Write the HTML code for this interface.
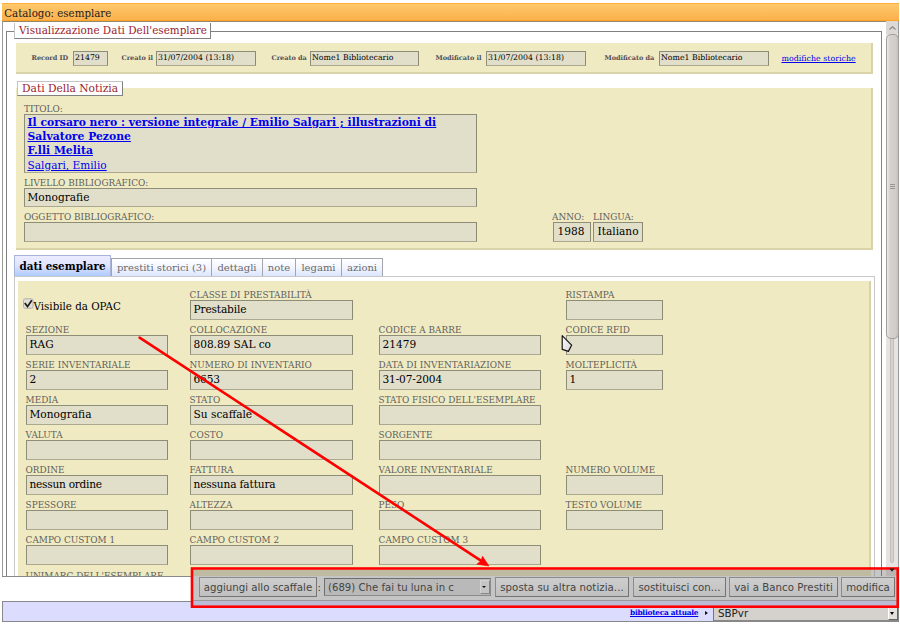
<!DOCTYPE html>
<html><head><meta charset="utf-8"><title>Catalogo: esemplare</title>
<style>
html,body{margin:0;padding:0;background:#fff;}
body{width:900px;height:624px;overflow:hidden;position:relative;font-family:"DejaVu Serif","Liberation Serif",serif;font-size:10px;color:#000;}
.abs,.lb,.in,.sl,.si{position:absolute;white-space:nowrap;}
#titlebar{left:2px;top:3px;width:897px;height:18px;background:linear-gradient(#fdb040 0,#fdb040 1px,#fec96c 1px,#fcb04c 17px,#faa428 17px);}
#titlebar span{position:absolute;left:2.2px;top:3.7px;font-size:10.25px;line-height:12px;color:#1a1a1a;}
#frame{left:2px;top:21px;width:897px;height:556px;box-sizing:border-box;border-left:1px solid #999;border-bottom:1px solid #888;border-top:1px solid #958870;overflow:hidden;}
.lb{font-size:8.9px;line-height:11px;color:#5e5e5e;letter-spacing:0;}
.in{height:18px;line-height:16.6px;font-size:10.6px;background:#e1dfca;border:1px solid;border-color:#8e8e78 #8a8a72 #aaa890 #8e8e78;padding-left:2px;text-indent:0.5px;box-sizing:content-box;overflow:hidden;}
.tl{position:absolute;left:2px;height:14px;line-height:14px;font-weight:bold;font-size:10.8px;white-space:nowrap;}
.beige{background:#efeac2;}
.leg{background:#fff;border:1px solid;border-color:#c4c4c4 #808080 #808080 #c4c4c4;color:#9b1c2e;font-size:10.5px;box-sizing:border-box;}
.sl{font-size:6.5px;font-weight:bold;color:#50505a;margin-left:-0.5px;line-height:10px;}
.si{height:13px;line-height:12.7px;font-size:7.8px;background:#e1dfca;border:1px solid;border-color:#8e8e78 #8a8a72 #aaa890 #8e8e78;padding-left:1px;overflow:hidden;}
a{color:#0000ee;text-decoration:underline;}
.tab{position:absolute;top:258px;height:19px;box-sizing:border-box;border:1px solid #a4a4ac;border-bottom:none;background:linear-gradient(#fff,#f2f5ff 50%,#d8e4ff);color:#6a6a6a;font-size:10px;line-height:18px;text-align:center;}
.btn{position:absolute;top:577px;height:20px;box-sizing:border-box;border:1px solid;border-color:#8c8c8c #747474 #747474 #8c8c8c;background:linear-gradient(#cecece,#c0c0c0);color:#444;font-family:"DejaVu Sans","Liberation Sans",sans-serif;font-size:10.2px;line-height:19.4px;text-align:center;white-space:nowrap;}
</style></head><body>
<div id="titlebar" class="abs"><span>Catalogo: esemplare</span></div>
<div id="frame" class="abs"></div>

<!-- outer fieldset -->
<div class="abs" style="left:6px;top:31px;width:876px;height:560px;border:1px solid #808080;border-bottom:none;box-sizing:border-box;"></div>
<div class="abs leg" style="left:14px;top:23px;width:197px;height:16px;line-height:15px;padding-left:4px;font-size:10.4px;border-top:none;">Visualizzazione Dati Dell'esemplare</div>

<!-- record bar -->
<div class="abs beige" style="left:16px;top:43px;width:857px;height:31px;box-sizing:border-box;border-right:2px solid #d8d3a8;border-bottom:2px solid #d8d3a8;"></div>
<div class="sl" style="left:32px;top:53px">Record ID</div>
<div class="si" style="left:73px;top:51px;width:32px">21479</div>
<div class="sl" style="left:122px;top:53px">Creato il</div>
<div class="si" style="left:156px;top:51px;width:97px">31/07/2004 (13:18)</div>
<div class="sl" style="left:272px;top:53px">Creato da</div>
<div class="si" style="left:310px;top:51px;width:106px">Nome1 Bibliotecario</div>
<div class="sl" style="left:436px;top:53px">Modificato il</div>
<div class="si" style="left:486px;top:51px;width:97px">31/07/2004 (13:18)</div>
<div class="sl" style="left:605px;top:53px">Modificato da</div>
<div class="si" style="left:659px;top:51px;width:107px">Nome1 Bibliotecario</div>
<a class="abs" style="left:781.5px;top:54px;font-size:7.9px;line-height:10px;">modifiche storiche</a>

<!-- dati della notizia -->
<div class="abs beige" style="left:16px;top:88px;width:857px;height:162px;box-sizing:border-box;border-right:2px solid #d8d3a8;border-bottom:2px solid #d8d3a8;"></div>
<div class="abs leg" style="left:17px;top:81px;width:106px;height:15px;line-height:13px;padding-left:4px;font-size:10.65px;">Dati Della Notizia</div>
<div class="lb" style="left:24px;top:104px">TITOLO:</div>
<div class="in" style="left:24px;top:114px;width:449px;height:57px;padding:0 0 0 2px;">
<div class="tl" style="top:1px"><a>Il corsaro nero : versione integrale / Emilio Salgari ; illustrazioni di</a></div>
<div class="tl" style="top:15px"><a>Salvatore Pezone</a></div>
<div class="tl" style="top:29px"><a>F.lli Melita</a></div>
<div class="tl" style="top:43px;font-weight:normal;font-size:10.55px"><a>Salgari, Emilio</a></div>
</div>
<div class="lb" style="left:24px;top:178px">LIVELLO BIBLIOGRAFICO:</div>
<div class="in" style="left:24px;top:188px;width:449px;height:17px">Monografie</div>
<div class="lb" style="left:24px;top:212px">OGGETTO BIBLIOGRAFICO:</div>
<div class="in" style="left:24px;top:222px;width:449px"></div>
<div class="lb" style="left:552px;top:212px">ANNO:</div>
<div class="in" style="left:553px;top:222px;width:33px;padding-left:3px">1988</div>
<div class="lb" style="left:593px;top:212px">LINGUA:</div>
<div class="in" style="left:593px;top:222px;width:45px;padding-left:3px">Italiano</div>

<!-- tabs -->
<div class="tab" style="left:14px;top:255px;height:22px;line-height:21px;width:97px;background:linear-gradient(#ececff,#dfe4ff 45%,#a9c8fd);color:#000;font-weight:bold;border-color:#a8b4d8;font-size:10.35px">dati esemplare</div>
<div class="tab" style="left:111px;width:101px;">prestiti storici (3)</div>
<div class="tab" style="left:211px;width:52px;">dettagli</div>
<div class="tab" style="left:262px;width:34px;">note</div>
<div class="tab" style="left:295px;width:47px;">legami</div>
<div class="tab" style="left:341px;width:42px;">azioni</div>
<!-- tab panel -->
<div class="abs" style="left:14px;top:276px;width:861px;height:320px;border:1px solid #c8c8c8;box-sizing:border-box;"></div>
<div class="abs beige" style="left:18px;top:281px;width:853px;height:320px;box-sizing:border-box;border-right:2px solid #d8d3a8;"></div>
<svg class="abs" style="left:22px;top:297px" width="13" height="13" viewBox="0 0 13 13"><rect x="1.5" y="1.8" width="9.5" height="9.5" rx="1.6" fill="#e0deda" stroke="#b4b0a8" stroke-width="1"/><path d="M2.8,6 L5.5,9.6 L9.8,3.2" fill="none" stroke="#1a1a1a" stroke-width="1.7" stroke-linejoin="miter"/></svg>
<div class="abs" style="left:33.5px;top:299.5px;font-size:10.3px;line-height:13px">Visibile da OPAC</div>
<div class="lb" style="left:189.6px;top:290px">CLASSE DI PRESTABILITÀ</div>
<div class="in" style="left:190px;top:300px;width:159px;letter-spacing:-0.15px">Prestabile</div>
<div class="lb" style="left:565.6px;top:290px">RISTAMPA</div>
<div class="in" style="left:566px;top:300px;width:93px"></div>
<div class="lb" style="left:25.6px;top:325px">SEZIONE</div>
<div class="in" style="left:26px;top:335px;width:138px">RAG</div>
<div class="lb" style="left:189.6px;top:325px">COLLOCAZIONE</div>
<div class="in" style="left:190px;top:335px;width:159px;letter-spacing:-0.05px">808.89 SAL co</div>
<div class="lb" style="left:378.6px;top:325px">CODICE A BARRE</div>
<div class="in" style="left:379px;top:335px;width:158px">21479</div>
<div class="lb" style="left:565.6px;top:325px">CODICE RFID</div>
<div class="in" style="left:566px;top:335px;width:93px"></div>
<div class="lb" style="left:25.6px;top:360px">SERIE INVENTARIALE</div>
<div class="in" style="left:26px;top:370px;width:138px">2</div>
<div class="lb" style="left:189.6px;top:360px">NUMERO DI INVENTARIO</div>
<div class="in" style="left:190px;top:370px;width:159px;letter-spacing:-0.15px">6653</div>
<div class="lb" style="left:378.6px;top:360px">DATA DI INVENTARIAZIONE</div>
<div class="in" style="left:379px;top:370px;width:158px;letter-spacing:-0.16px">31-07-2004</div>
<div class="lb" style="left:565.6px;top:360px">MOLTEPLICITÀ</div>
<div class="in" style="left:566px;top:370px;width:93px">1</div>
<div class="lb" style="left:25.6px;top:395px">MEDIA</div>
<div class="in" style="left:26px;top:405px;width:138px">Monografia</div>
<div class="lb" style="left:189.6px;top:395px">STATO</div>
<div class="in" style="left:190px;top:405px;width:159px">Su scaffale</div>
<div class="lb" style="left:378.6px;top:395px">STATO FISICO DELL'ESEMPLARE</div>
<div class="in" style="left:379px;top:405px;width:158px"></div>
<div class="lb" style="left:25.6px;top:430px">VALUTA</div>
<div class="in" style="left:26px;top:440px;width:138px"></div>
<div class="lb" style="left:189.6px;top:430px">COSTO</div>
<div class="in" style="left:190px;top:440px;width:159px"></div>
<div class="lb" style="left:378.6px;top:430px">SORGENTE</div>
<div class="in" style="left:379px;top:440px;width:158px"></div>
<div class="lb" style="left:25.6px;top:465px">ORDINE</div>
<div class="in" style="left:26px;top:475px;width:138px;letter-spacing:-0.26px">nessun ordine</div>
<div class="lb" style="left:189.6px;top:465px">FATTURA</div>
<div class="in" style="left:190px;top:475px;width:159px;letter-spacing:-0.15px">nessuna fattura</div>
<div class="lb" style="left:378.6px;top:465px">VALORE INVENTARIALE</div>
<div class="in" style="left:379px;top:475px;width:158px"></div>
<div class="lb" style="left:565.6px;top:465px">NUMERO VOLUME</div>
<div class="in" style="left:566px;top:475px;width:93px"></div>
<div class="lb" style="left:25.6px;top:500px">SPESSORE</div>
<div class="in" style="left:26px;top:510px;width:138px"></div>
<div class="lb" style="left:189.6px;top:500px">ALTEZZA</div>
<div class="in" style="left:190px;top:510px;width:159px"></div>
<div class="lb" style="left:378.6px;top:500px">PESO</div>
<div class="in" style="left:379px;top:510px;width:158px"></div>
<div class="lb" style="left:565.6px;top:500px">TESTO VOLUME</div>
<div class="in" style="left:566px;top:510px;width:93px"></div>
<div class="lb" style="left:25.6px;top:535px">CAMPO CUSTOM 1</div>
<div class="in" style="left:26px;top:545px;width:138px"></div>
<div class="lb" style="left:189.6px;top:535px">CAMPO CUSTOM 2</div>
<div class="in" style="left:190px;top:545px;width:159px"></div>
<div class="lb" style="left:378.6px;top:535px">CAMPO CUSTOM 3</div>
<div class="in" style="left:379px;top:545px;width:158px"></div>
<div class="lb" style="left:25.6px;top:571px">UNIMARC DELL'ESEMPLARE</div>


<!-- scrollbar -->
<div class="abs" style="left:886px;top:21px;width:13px;height:555px;background:#e6e3e0;border-right:1px solid #999;box-sizing:border-box;"></div>
<div class="abs" style="left:886px;top:21px;width:12px;height:13px;background:#dbd8d5;"></div>
<div class="abs" style="left:890px;top:330px;width:4px;height:233px;background:#d6d3cf;border:1px solid #c2beba;border-radius:2px;box-sizing:border-box;"></div>
<div class="abs" style="left:886px;top:34px;width:13px;height:305px;border-radius:5px;border:1px solid #a29e9a;box-sizing:border-box;background:linear-gradient(90deg,#eceae8,#d6d2cf 25%,#d0ccc9 80%,#c4c0bd);"></div>
<svg class="abs" style="left:886px;top:21px" width="13" height="556" viewBox="0 0 13 556">
<polyline points="3.5,8.5 6.5,5.7 9.5,8.5" fill="none" stroke="#8a8784" stroke-width="1.2"/>
<path d="M4,163.5h5M4,165.5h5M4,167.5h5" stroke="#9a9693" stroke-width="1"/>
<polygon points="4,547 9,547 6.5,550" fill="#333"/>
</svg>

<!-- below frame -->
<div class="abs" style="left:0;top:577px;width:900px;height:47px;background:#fff;"></div>
<div class="abs" style="left:2px;top:576px;width:897px;height:1px;background:#8a8a8a;"></div>
<div class="abs" style="left:2px;top:601px;width:897px;height:21px;box-sizing:border-box;background:#dcdcff;border:1px solid #888;"></div>
<a class="abs" style="left:630px;top:608px;font-size:7.4px;line-height:10px;font-weight:bold;letter-spacing:-0.26px">biblioteca attuale</a>
<div class="abs" style="left:705px;top:611px;width:0;height:0;border-top:2.5px solid transparent;border-bottom:2.5px solid transparent;border-left:3.5px solid #111;"></div>
<div class="abs" style="left:713px;top:603px;width:186px;height:18px;box-sizing:border-box;border:1px solid;border-color:#777 #888 #888 #777;background:#d5d1cd;font-family:'DejaVu Sans',sans-serif;font-size:10.3px;line-height:18px;padding-left:4px;color:#222">SBPvr</div>
<div class="abs" style="left:888px;top:604px;width:10px;height:16px;background:#e4e1dd;border:1px solid;border-color:#fff #666 #666 #fff;box-sizing:border-box;"></div>
<div class="abs" style="left:889.8px;top:611.5px;width:0;height:0;border-left:2.5px solid transparent;border-right:2.5px solid transparent;border-top:3px solid #000;"></div>

<!-- annotation overlay -->
<div class="abs" style="left:193px;top:570px;width:704px;height:36px;background:#c5c5c5;"></div>
<div class="abs" style="left:193px;top:570px;width:704px;height:6px;background:#bfbba2;"></div>
<div class="abs" style="left:871px;top:570px;width:26px;height:6px;background:#c6c6c6;"></div>
<div class="abs" style="left:874px;top:570px;width:1px;height:6px;background:#a8a8a8;"></div>
<div class="abs" style="left:881px;top:570px;width:1px;height:6px;background:#777;"></div>
<div class="abs" style="left:886px;top:570px;width:11px;height:6px;background:#b8b5b2;"></div>
<div class="abs" style="left:193px;top:600px;width:704px;height:1px;background:#9a9a9a;"></div>
<div class="abs" style="left:193px;top:601px;width:704px;height:5px;background:#bcbcd6;"></div>
<div class="btn" style="left:199px;width:118px;">aggiungi allo scaffale</div>
<div class="abs" style="left:317.5px;top:580.5px;font-family:'DejaVu Sans',sans-serif;font-size:10.1px;line-height:14px;color:#333">:</div>
<div class="abs" style="left:324px;top:578px;width:167px;height:18px;box-sizing:border-box;border:1px solid;border-color:#6e6e6e #8a8a8a #8a8a8a #6e6e6e;background:#b9b9b9;color:#444;font-family:'DejaVu Sans',sans-serif;font-size:10.15px;line-height:17px;padding-left:3px;">(689) Che fai tu luna in c</div>
<div class="abs" style="left:480px;top:580px;width:10px;height:14px;box-sizing:border-box;background:#c5c5c5;border:1px solid;border-color:#d4d4d4 #868686 #868686 #d4d4d4;"></div>
<div class="abs" style="left:482.4px;top:585.8px;width:0;height:0;border-left:2.4px solid transparent;border-right:2.4px solid transparent;border-top:2.8px solid #111;"></div>
<div class="btn" style="left:495px;width:134px;font-size:10.2px;letter-spacing:0.05px">sposta su altra notizia...</div>
<div class="btn" style="left:633px;width:93px;font-size:10.2px">sostituisci con...</div>
<div class="btn" style="left:729px;width:109px;font-size:10.2px;letter-spacing:0.05px">vai a Banco Prestiti</div>
<div class="btn" style="left:841px;width:54px;">modifica</div>
<svg class="abs" style="left:0;top:0" width="900" height="624" viewBox="0 0 900 624">
<defs><linearGradient id="cg" x1="0" y1="0" x2="1" y2="1"><stop offset="0" stop-color="#fff"/><stop offset="1" stop-color="#d4d4d4"/></linearGradient></defs>
<polygon points="562.2,335.6 562.2,349.4 568.4,351.4 571.6,345.2" fill="url(#cg)" stroke="#151515" stroke-width="1.2" stroke-linejoin="round"/>
<rect x="192" y="568.5" width="705.7" height="38.2" fill="none" stroke="#ff0000" stroke-width="2.6"/>
<line x1="139.6" y1="337.6" x2="482" y2="561.4" stroke="#ff0000" stroke-width="2.6" stroke-linecap="round"/>
<polygon points="889.5,568.5 894.5,568.5 892,571.8" fill="#222"/>
<polygon points="489,566 482.5,556.3 481,561 476.8,564.2" fill="#ff0000" stroke="#ff0000" stroke-width="0.6" stroke-linejoin="round"/>
</svg>
</body></html>
